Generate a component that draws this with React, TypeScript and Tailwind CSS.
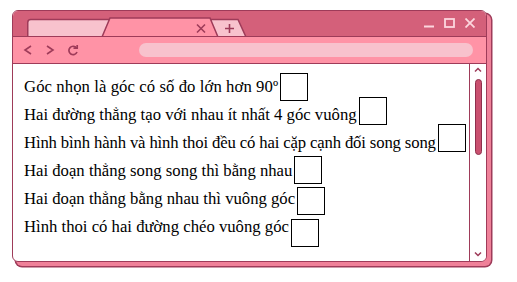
import React from "react";

const DARK = "#9e3b59";

const rows: [string, string, string][] = [
  ["Góc nhọn là góc có số đo lớn hơn 90º", "mt-0", "tracking-[0.08px]"],
  ["Hai đường thẳng tạo với nhau ít nhất 4 góc vuông", "-mt-[4px]", "tracking-normal"],
  ["Hình bình hành và hình thoi đều có hai cặp cạnh đối song song", "-mt-[5px]", "tracking-[-0.14px]"],
  ["Hai đoạn thẳng song song thì bằng nhau", "-mt-[1px]", "tracking-normal"],
  ["Hai đoạn thẳng bằng nhau thì vuông góc", "mt-[2px]", "tracking-normal"],
  ["Hình thoi có hai đường chéo vuông góc", "mt-[6px]", "tracking-normal"],
];

function Tabs() {
  return (
    <svg width="222" height="20" viewBox="0 0 222 20" className="block">
      {/* inactive tab */}
      <path
        d="M0.75 20 V5.5 Q0.75 2.5 3.75 2.5 H84 L76 20"
        fill="#f8c2cd"
        stroke={DARK}
        strokeWidth="1.5"
      />
      {/* plus tab */}
      <path
        d="M180 20 L184 2.5 H211 L219 20"
        fill="#f8c2cd"
        stroke={DARK}
        strokeWidth="1.5"
      />
      {/* active tab */}
      <path
        d="M75 20 L83 1 H183 L191 20"
        fill="#ff93a6"
        stroke={DARK}
        strokeWidth="1.5"
      />
      <path d="M170 7.5 L178 15.5 M178 7.5 L170 15.5" stroke={DARK} strokeWidth="1.6" />
      <path d="M198 11.5 H207 M202.5 7 V16" stroke={DARK} strokeWidth="1.6" />
    </svg>
  );
}

function WindowControls() {
  return (
    <div className="flex items-start gap-[10px] mt-[7px] mr-[11px]">
      <svg width="10" height="10" viewBox="0 0 10 10">
        <path d="M0 8.5 H10" stroke="#fcd6de" strokeWidth="1.8" />
      </svg>
      <svg width="11" height="10" viewBox="0 0 11 10">
        <rect x="1" y="1" width="9" height="8" fill="none" stroke="#fcd6de" strokeWidth="1.8" />
      </svg>
      <svg width="10" height="10" viewBox="0 0 10 10">
        <path d="M0.5 0.5 L9.5 9.5 M9.5 0.5 L0.5 9.5" stroke="#fcd6de" strokeWidth="1.8" />
      </svg>
    </div>
  );
}

function NavIcons() {
  return (
    <div className="flex items-center gap-[12px] ml-[10px]">
      <svg width="10" height="10" viewBox="0 0 10 10">
        <path d="M8 1 L2 5 L8 9" fill="none" stroke={DARK} strokeWidth="1.6" />
      </svg>
      <svg width="10" height="10" viewBox="0 0 10 10">
        <path d="M2 1 L8 5 L2 9" fill="none" stroke={DARK} strokeWidth="1.6" />
      </svg>
      <svg width="12" height="11" viewBox="0 0 12 11">
        <path d="M9.5 3 A4.2 4.2 0 1 0 10 7" fill="none" stroke={DARK} strokeWidth="1.7" />
        <path d="M6.5 3.2 H10.2 V0" fill="none" stroke={DARK} strokeWidth="1.7" />
      </svg>
    </div>
  );
}

function Scrollbar() {
  return (
    <div className="w-[17px] border-l-[1.5px] border-[#9e3b59] bg-white flex flex-col items-center">
      <svg width="8" height="6" viewBox="0 0 8 6" className="mt-[3px]">
        <path d="M1 4.5 L4 1.5 L7 4.5" fill="none" stroke={DARK} strokeWidth="1.5" />
      </svg>
      <div className="mt-[6px] w-[7px] h-[76px] rounded-full bg-[#c9506f] border border-[#8e2f4c]" />
      <div className="flex-1" />
      <svg width="8" height="6" viewBox="0 0 8 6" className="mb-[4px]">
        <path d="M1 1.5 L4 4.5 L7 1.5" fill="none" stroke={DARK} strokeWidth="1.5" />
      </svg>
    </div>
  );
}

export default function App() {
  return (
    <div className="w-[517px] h-[282px] bg-white pt-[10px] pl-[12px]">
      <div className="w-[475px] h-[252px] flex flex-col rounded-[6px] border-[1.5px] border-[#9e3b59] overflow-hidden shadow-[4px_4px_0_0_#ef8199,4px_4px_0_1.5px_#9e3b59] bg-white">
        <div className="h-[25px] bg-[#d4607a] flex justify-between">
          <div className="self-end pl-[14px] -mb-[1px]">
            <Tabs />
          </div>
          <WindowControls />
        </div>
        <div className="h-[28px] bg-[#ff93a6] border-y-[1.5px] border-[#9e3b59] flex items-center">
          <NavIcons />
          <div className="ml-[60px] w-[334px] h-[14px] rounded-full bg-[#f8c2cd]" />
        </div>
        <div className="flex-1 flex">
          <div className="flex-1 pt-[9px] pl-[11px] font-['Liberation_Serif',serif] text-[16.7px] text-black">
            {rows.map(([text, offset, tracking]) => (
              <div key={text} className="h-[28px] flex items-start">
                <span className={`leading-[28px] whitespace-nowrap ${tracking}`}>{text}</span>
                <span className={`ml-[2px] w-[28px] h-[28px] border border-black shrink-0 ${offset}`} />
              </div>
            ))}
          </div>
          <Scrollbar />
        </div>
      </div>
    </div>
  );
}
